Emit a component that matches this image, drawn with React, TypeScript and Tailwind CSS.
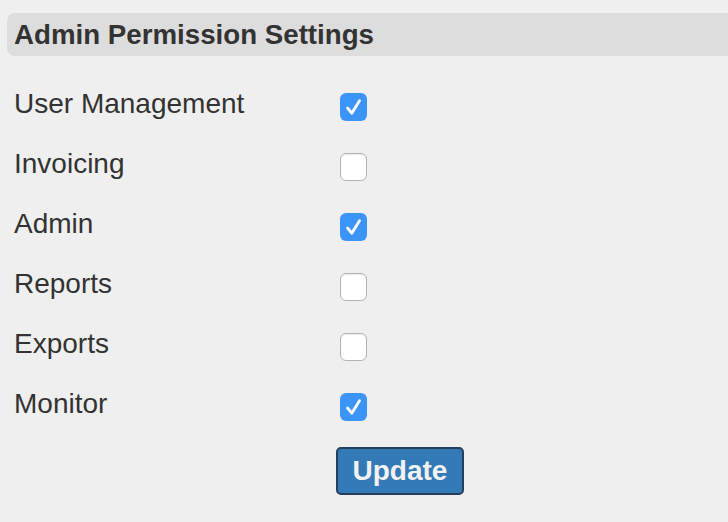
import { useState } from "react";

const PERMISSIONS = [
  { name: "User Management", on: true },
  { name: "Invoicing", on: false },
  { name: "Admin", on: true },
  { name: "Reports", on: false },
  { name: "Exports", on: false },
  { name: "Monitor", on: true },
];

function Checkbox({ checked, onToggle }: { checked: boolean; onToggle: () => void }) {
  return (
    <button
      type="button"
      onClick={onToggle}
      className={
        checked
          ? "mt-[6px] block h-[28px] w-[27px] rounded-[6px] bg-[#3b95f6]"
          : "mt-[6px] block h-[28px] w-[27px] rounded-[6px] border border-[#b3b3b3] bg-white shadow-[inset_0_1px_1px_rgba(0,0,0,0.08)]"
      }
    >
      {checked && (
        <svg width="27" height="28" viewBox="0 0 27 28" fill="none" className="block">
          <path
            d="M7.5 15 L11.8 20.2 L19.5 7.8"
            stroke="white"
            strokeWidth="2.8"
            strokeLinecap="round"
            strokeLinejoin="round"
          />
        </svg>
      )}
    </button>
  );
}

export default function App() {
  const [perms, setPerms] = useState(PERMISSIONS);

  const toggle = (name: string) => {
    setPerms((prev) =>
      prev.map((p) => (p.name === name ? { ...p, on: !p.on } : p))
    );
  };

  return (
    <div
      className="min-h-[522px] w-[728px] bg-[#efefef] pt-[13px] text-[#333333]"
      style={{ fontFamily: '"Liberation Sans", Arial, sans-serif' }}
    >
      <div className="ml-[7px] flex h-[43px] items-center rounded-l-[8px] bg-[#dddddd] pl-[7px]">
        <h2 className="text-[27.7px] font-bold">Admin Permission Settings</h2>
      </div>

      <div className="mt-[18px] pl-[14px]">
        {perms.map((p) => (
          <div key={p.name} className="flex h-[60px] items-center">
            <label className="w-[326px] text-[28px]">{p.name}</label>
            <Checkbox checked={p.on} onToggle={() => toggle(p.name)} />
          </div>
        ))}
      </div>

      <div className="mt-[13px] pl-[336px]">
        <button
          type="button"
          className="h-[48px] w-[128px] rounded-[5px] border-2 border-[#243f5c] bg-[#337ab7] text-[28px] font-bold text-[#f2f2f2]"
        >
          Update
        </button>
      </div>
    </div>
  );
}
